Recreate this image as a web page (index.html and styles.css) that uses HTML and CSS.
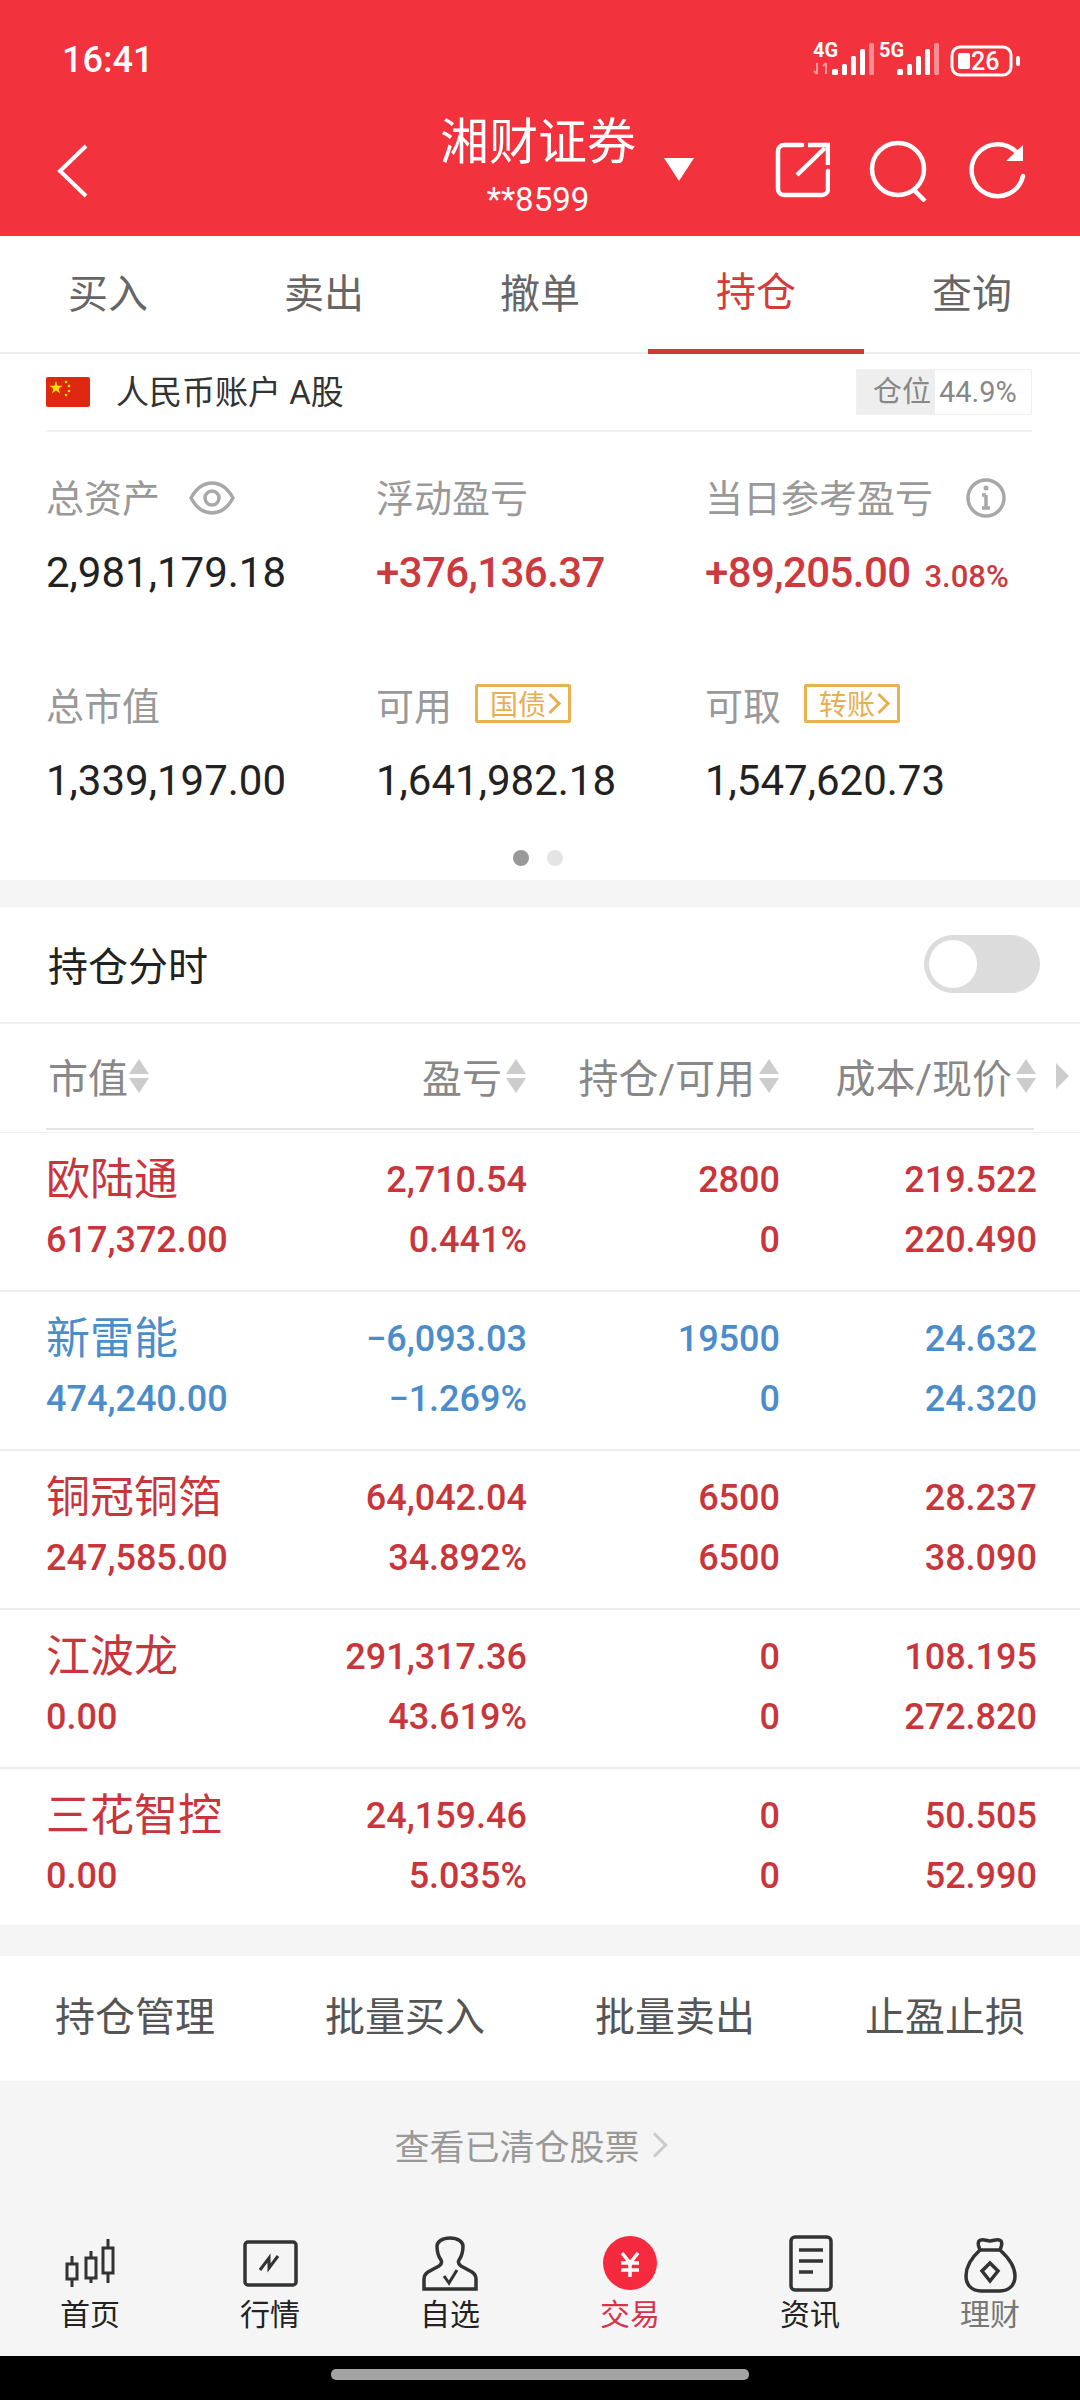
FILE: index.html
```html
<!DOCTYPE html>
<html lang="zh-CN">

<head>
    <meta charset="UTF-8">
    <meta name="viewport" content="width=device-width, initial-scale=1.0">
    <title>湘财证券</title>
    <link rel="stylesheet" href="styles.css">
</head>

<body>
    <header class="top">
        <div class="status">
            <span class="clock">16:41</span>
            <svg class="status-icons" width="240" height="48" viewBox="0 -8 240 48">
                <text x="0" y="17" class="net">4G</text>
                <path d="M4 23v11M1 31l3 3M13 34V23M10 26l3-3" stroke="#fff" stroke-opacity=".5" stroke-width="2" fill="none" />
                <g fill="#fff">
                    <rect x="19" y="29" width="6" height="6" rx="1.5" />
                    <rect x="29" y="24" width="5" height="11" rx="1.5" />
                    <rect x="38" y="16" width="5" height="19" rx="1.5" />
                    <rect x="47" y="9" width="5" height="26" rx="1.5" />
                    <rect x="56" y="3" width="5" height="32" rx="1.5" fill-opacity=".45" />
                </g>
                <text x="66" y="17" class="net">5G</text>
                <g fill="#fff">
                    <rect x="84" y="29" width="6" height="6" rx="1.5" />
                    <rect x="94" y="24" width="5" height="11" rx="1.5" />
                    <rect x="103" y="16" width="5" height="19" rx="1.5" />
                    <rect x="112" y="9" width="5" height="26" rx="1.5" />
                    <rect x="121" y="3" width="5" height="32" rx="1.5" fill-opacity=".45" />
                </g>
                <rect x="139" y="7" width="59" height="28" rx="8" fill="none" stroke="#fff" stroke-width="3" />
                <rect x="145" y="13" width="12" height="16" rx="2" fill="#fff" />
                <text x="158" y="30" class="batt">26</text>
                <rect x="203" y="16" width="4" height="10" rx="2" fill="#fff" />
            </svg>
        </div>
        <div class="nav-bar">
            <svg class="back" width="34" height="54" viewBox="0 0 34 54">
                <path d="M30 2L4 27l26 25" fill="none" stroke="#fff" stroke-width="4" />
            </svg>
            <div class="title-box">
                <div class="title">湘财证券</div>
                <div class="acct">**8599</div>
            </div>
            <svg class="caret" width="30" height="23" viewBox="0 0 30 23">
                <path d="M0 0h30L15 23z" fill="#fff" />
            </svg>
            <div class="nav-icons">
                <svg width="56" height="58" viewBox="0 0 56 58" fill="none" stroke="#fff" stroke-width="4.5">
                    <path d="M28 5H10a6 6 0 0 0-6 6v38a6 6 0 0 0 6 6h38a6 6 0 0 0 6-6V31" stroke-linecap="round" />
                    <path d="M23 35L51 8" />
                    <path d="M34 5h20v20" />
                </svg>
                <svg width="62" height="62" viewBox="0 0 62 62" fill="none" stroke="#fff" stroke-width="4.5">
                    <circle cx="30" cy="29" r="26" />
                    <path d="M46 50l11 11" />
                </svg>
                <svg width="60" height="60" viewBox="0 0 60 60" fill="none" stroke="#fff" stroke-width="4.5">
                    <path d="M50 14A26 26 0 1 0 55 36" stroke-linecap="round" />
                    <path d="M55 5v16H38z" fill="#fff" stroke="none" />
                </svg>
            </div>
        </div>
    </header>

    <nav class="tabs">
        <div class="tab">买入</div>
        <div class="tab">卖出</div>
        <div class="tab">撤单</div>
        <div class="tab active">持仓</div>
        <div class="tab">查询</div>
    </nav>

    <section class="account">
        <div class="account-row">
            <svg class="flag" width="44" height="30" viewBox="0 0 44 30">
                <rect width="44" height="30" rx="2" fill="#de2910" />
                <path d="M10 4l1.6 4.8h5l-4 3 1.5 4.8-4.100-3-4.100 3 1.500-4.800-4-3h5z" fill="#ffde00" />
                <circle cx="20" cy="5" r="1.300" fill="#ffde00" />
                <circle cx="23" cy="9" r="1.300" fill="#ffde00" />
                <circle cx="23" cy="14" r="1.300" fill="#ffde00" />
                <circle cx="20" cy="18" r="1.300" fill="#ffde00" />
            </svg>
            <span class="account-name">人民币账户 A股</span>
            <div class="position">
                <span class="position-label">仓位</span>
                <span class="position-value">44.9%</span>
            </div>
        </div>

        <div class="stats">
            <div class="stat">
                <div class="stat-label">总资产
                    <svg class="eye" width="46" height="34" viewBox="0 0 46 34" fill="none" stroke="#a8a8a8" stroke-width="3.500">
                        <path d="M2 17C8 6 15 2 23 2s15 4 21 15c-6 11-13 15-21 15S8 28 2 17z" />
                        <circle cx="23" cy="17" r="7" />
                    </svg>
                </div>
                <div class="stat-value">2,981,179.18</div>
            </div>
            <div class="stat">
                <div class="stat-label">浮动盈亏</div>
                <div class="stat-value up">+376,136.37</div>
            </div>
            <div class="stat">
                <div class="stat-label">当日参考盈亏
                    <svg class="info" width="40" height="40" viewBox="0 0 40 40" fill="none" stroke="#a8a8a8" stroke-width="3.500">
                        <circle cx="20" cy="20" r="18" />
                        <path d="M20 17v13M16 17h4M16 30h8" />
                        <circle cx="20" cy="10" r="2.500" fill="#a8a8a8" stroke="none" />
                    </svg>
                </div>
                <div class="stat-value up">+89,205.00<span class="stat-pct">3.08%</span></div>
            </div>
            <div class="stat">
                <div class="stat-label">总市值</div>
                <div class="stat-value">1,339,197.00</div>
            </div>
            <div class="stat">
                <div class="stat-label">可用<span class="chip">国债<i class="chip-arrow"></i></span></div>
                <div class="stat-value">1,641,982.18</div>
            </div>
            <div class="stat">
                <div class="stat-label">可取<span class="chip">转账<i class="chip-arrow"></i></span></div>
                <div class="stat-value">1,547,620.73</div>
            </div>
        </div>

        <div class="dots">
            <span class="dot on"></span>
            <span class="dot"></span>
        </div>
    </section>

    <section class="holdings">
        <div class="switch-row">
            <span>持仓分时</span>
            <div class="switch"><div class="knob"></div></div>
        </div>
        <div class="head-wrap">
            <div class="grid head">
                <div class="left">市值<i class="sort"></i></div>
                <div>盈亏<i class="sort"></i></div>
                <div>持仓/可用<i class="sort"></i></div>
                <div>成本/现价<i class="sort"></i></div>
                <i class="more"></i>
            </div>
        </div>

        <div class="grid stock up">
            <div class="name">欧陆通</div><div>2,710.54</div><div>2800</div><div>219.522</div>
            <div class="left">617,372.00</div><div>0.441%</div><div>0</div><div>220.490</div>
        </div>
        <div class="grid stock down">
            <div class="name">新雷能</div><div>−6,093.03</div><div>19500</div><div>24.632</div>
            <div class="left">474,240.00</div><div>−1.269%</div><div>0</div><div>24.320</div>
        </div>
        <div class="grid stock up">
            <div class="name">铜冠铜箔</div><div>64,042.04</div><div>6500</div><div>28.237</div>
            <div class="left">247,585.00</div><div>34.892%</div><div>6500</div><div>38.090</div>
        </div>
        <div class="grid stock up">
            <div class="name">江波龙</div><div>291,317.36</div><div>0</div><div>108.195</div>
            <div class="left">0.00</div><div>43.619%</div><div>0</div><div>272.820</div>
        </div>
        <div class="grid stock up last">
            <div class="name">三花智控</div><div>24,159.46</div><div>0</div><div>50.505</div>
            <div class="left">0.00</div><div>5.035%</div><div>0</div><div>52.990</div>
        </div>
    </section>

    <section class="actions">
        <div>持仓管理</div>
        <div>批量买入</div>
        <div>批量卖出</div>
        <div>止盈止损</div>
    </section>

    <div class="cleared">查看已清仓股票<i class="cleared-arrow"></i></div>

    <footer class="bottom-nav">
        <div class="nav-item">
            <svg width="60" height="60" viewBox="0 0 60 60" fill="none" stroke="#333" stroke-width="3">
                <path d="M12 23v8M12 46v8M7 31h10v15H7zM31 18v7M31 45v5M26 25h10v20H26zM48 6v9M48 40v10M43 15h10v25H43z" />
            </svg>
            <span>首页</span>
        </div>
        <div class="nav-item">
            <svg width="60" height="60" viewBox="0 0 60 60" fill="none" stroke="#333">
                <rect x="5" y="9" width="51" height="43" rx="3" stroke-width="3.500" />
                <path d="M20 37l9-12v10l9-12" stroke-width="3" />
            </svg>
            <span>行情</span>
        </div>
        <div class="nav-item">
            <svg width="60" height="60" viewBox="0 0 60 60" fill="none" stroke="#333" stroke-width="3.500">
                <path d="M4 56V46c0-3 1-5 4-7l11-6c3-2 3-4 2-6-3-4-4-9-4-14 0-4 5-8 13-8s13 4 13 8c0 5-1 10-4 14-1 2-1 4 2 6l11 6c3 2 4 4 4 7v10z" />
                <path d="M24 43l5 7 8-13" stroke-width="3" />
            </svg>
            <span>自选</span>
        </div>
        <div class="nav-item active">
            <svg width="60" height="60" viewBox="0 0 60 60">
                <circle cx="30" cy="30" r="27" fill="#f52a3e" />
                <path d="M22 20l8 10 8-10M21 30h18M21 37h18M30 30v14" fill="none" stroke="#fff" stroke-width="3.500" />
            </svg>
            <span>交易</span>
        </div>
        <div class="nav-item">
            <svg width="60" height="60" viewBox="0 0 60 60" fill="none" stroke="#333">
                <rect x="11" y="4" width="40" height="53" rx="4" stroke-width="3.500" />
                <path d="M19 17h24M19 28h24M19 39h14" stroke-width="3.500" />
            </svg>
            <span>资讯</span>
        </div>
        <div class="nav-item muted">
            <svg width="60" height="60" viewBox="0 0 60 60" fill="none" stroke="#333" stroke-width="3.500">
                <path d="M20 17c-1-3-3-6-1-9 3-3 7 0 11 0s8-3 11 0c2 3 0 6-1 9z" />
                <path d="M20 17C10 26 6 34 6 43c0 9 6 15 15 15h19c9 0 15-6 15-15 0-9-5-17-15-26" />
                <path d="M30 30l8 8-8 10-8-10z" />
            </svg>
            <span>理财</span>
        </div>
    </footer>

    <div class="home-bar"><div class="pill"></div></div>
</body>

</html>
```

FILE: styles.css
```css
* {
    box-sizing: border-box;
}

body {
    margin: 0;
    width: 1080px;
    height: 2400px;
    overflow: hidden;
    background-color: #f5f5f5;
    font-family: Roboto, "Noto Sans CJK SC", sans-serif;
    color: #222;
}

i {
    font-style: normal;
}

/* red header */
.top {
    height: 236px;
    background-color: #f2323c;
    color: white;
}

.status {
    height: 100px;
    padding: 38px 0 0 62px;
    display: flex;
    justify-content: space-between;
    align-items: flex-start;
}

.clock {
    font-size: 36px;
    line-height: 44px;
    font-weight: 500;
}

.status-icons {
    margin: -6px 27px 0 0;
}

.net {
    font: 700 20px Roboto, sans-serif;
    fill: white;
}

.batt {
    font: 500 25px Roboto, sans-serif;
    fill: white;
}

.nav-bar {
    height: 136px;
    display: flex;
    align-items: flex-start;
    padding-left: 56px;
}

.back {
    margin-top: 44px;
}

.title-box {
    width: 196px;
    margin-left: 350px;
    text-align: center;
    color: white;
}

.title {
    font-size: 49px;
    line-height: 60px;
    margin-top: 8px;
    font-family: "Noto Sans CJK SC", sans-serif;
}

.acct {
    font-size: 33px;
    line-height: 38px;
    margin-top: 13px;
}

.caret {
    margin: 58px 0 0 28px;
}

.nav-icons {
    display: flex;
    align-items: flex-start;
    margin: 40px 0 0 80px;
    gap: 38px;
}

/* trade tabs */
.tabs {
    height: 118px;
    display: grid;
    grid-template-columns: repeat(5, 216px);
    background-color: white;
    border-bottom: 2px solid #eee;
}

.tab {
    text-align: center;
    font-size: 40px;
    line-height: 117px;
    color: #666;
}

.tab.active {
    color: #d33c3a;
    border-bottom: 5px solid #cc3a3a;
    height: 118px;
    line-height: 113px;
}

/* account summary */
.account {
    height: 526px;
    background-color: white;
    padding: 0 48px 0 46px;
}

.account-row {
    height: 78px;
    display: flex;
    align-items: center;
    border-bottom: 2px solid #f0f0f0;
}

.flag {
    flex: none;
}

.account-name {
    margin-left: 26px;
    padding-bottom: 5px;
    font-size: 33px;
    color: #333;
}

.position {
    margin-left: auto;
    display: flex;
    height: 46px;
    border: 1px solid #f0f0f0;
    font-size: 29px;
    line-height: 44px;
    color: #888;
}

.position-label {
    width: 78px;
    text-align: right;
    padding-right: 4px;
    background-color: #eeeeee;
}

.position-value {
    width: 96px;
    padding-left: 4px;
}

.stats {
    display: grid;
    grid-template-columns: 330px 329px 1fr;
    grid-auto-rows: 208px;
    padding-top: 35px;
}

.stat-label {
    display: flex;
    align-items: center;
    height: 56px;
    font-size: 38px;
    color: #999;
}

.eye {
    margin: 6px 0 0 29px;
}

.info {
    margin: 5px 0 0 33px;
}

.stat-value {
    margin-top: 23px;
    font-size: 42px;
    line-height: 54px;
    color: #222;
    white-space: nowrap;
}

.stat-value.up {
    color: #cc3a40;
    font-weight: 500;
    letter-spacing: -0.6px;
}

.stat-pct {
    font-size: 31px;
    margin-left: 14px;
    letter-spacing: 0;
}

.chip {
    display: flex;
    align-items: center;
    height: 39px;
    margin-left: 23px;
    padding: 0 10px 0 12px;
    border: 3px solid #eab153;
    border-radius: 2px;
    font-size: 28px;
    color: #e8ae52;
}

.chip-arrow {
    width: 15px;
    height: 15px;
    margin-left: -3px;
    border-top: 3px solid #e8ae52;
    border-right: 3px solid #e8ae52;
    transform: rotate(45deg);
}

.dots {
    display: flex;
    justify-content: center;
    gap: 18px;
    margin-top: -33px;
    padding-right: 2px;
}

.dot {
    width: 16px;
    height: 16px;
    border-radius: 50%;
    background-color: #e4e4e4;
}

.dot.on {
    background-color: #999;
}

/* holdings table */
.holdings {
    margin-top: 27px;
    background-color: white;
}

.switch-row {
    height: 117px;
    padding: 0 40px 2px 48px;
    display: flex;
    justify-content: space-between;
    align-items: center;
    font-size: 40px;
    border-bottom: 2px solid #f0f0f0;
}

.switch {
    width: 116px;
    height: 58px;
    padding: 5px;
    border-radius: 29px;
    background-color: #dcdcdc;
}

.knob {
    width: 48px;
    height: 48px;
    border-radius: 50%;
    background-color: white;
}

.grid {
    display: grid;
    grid-template-columns: 250px 231px 253px 257px;
    text-align: right;
}

.head-wrap {
    padding-left: 46px;
    height: 109px;
    border-bottom: 1px solid #f0f0f0;
}

.head {
    grid-template-columns: 250px 231px 253px 257px 30px;
    align-items: center;
    height: 106px;
    width: 988px;
    font-size: 40px;
    color: #888;
    border-bottom: 2px solid #e4e4e4;
}

.head > div {
    display: flex;
    justify-content: flex-end;
    align-items: center;
    white-space: nowrap;
}

.head > .left {
    justify-content: flex-start;
    padding-left: 2px;
}

.sort {
    position: relative;
    width: 22px;
    height: 34px;
    margin-left: 3px;
}

.head > .left .sort {
    margin-left: 0;
}

.sort::before,
.sort::after {
    content: "";
    position: absolute;
    left: 1px;
    border-left: 10px solid transparent;
    border-right: 10px solid transparent;
}

.sort::before {
    top: 0;
    border-bottom: 15px solid #ccc;
}

.sort::after {
    bottom: 0;
    border-top: 15px solid #ccc;
}

.more {
    justify-self: end;
    width: 0;
    height: 0;
    border-left: 13px solid #ccc;
    border-top: 13px solid transparent;
    border-bottom: 13px solid transparent;
    margin-right: -2px;
}

.stock {
    height: 159px;
    padding: 17px 0 0 46px;
    grid-auto-rows: 60px;
    font-size: 36px;
    line-height: 60px;
    font-weight: 500;
    border-bottom: 2px solid #eee;
}

.stock.last {
    border-bottom: 0;
    height: 156px;
}

.stock.up {
    color: #c8363c;
}

.stock.down {
    color: #4b8ccb;
}

.stock .name {
    font-size: 44px;
    font-weight: 400;
    text-align: left;
}

.stock .left {
    text-align: left;
}

/* bottom */
.actions {
    margin-top: 31px;
    height: 125px;
    padding-bottom: 10px;
    background-color: white;
    display: grid;
    grid-template-columns: repeat(4, 270px);
    align-items: center;
    text-align: center;
    font-size: 40px;
    color: #555;
}

.cleared {
    height: 135px;
    display: flex;
    justify-content: center;
    align-items: center;
    font-size: 35px;
    color: #999;
    padding: 0 22px 8px 0;
}

.cleared-arrow {
    width: 18px;
    height: 18px;
    margin-left: 6px;
    border-top: 3px solid #ccc;
    border-right: 3px solid #ccc;
    transform: rotate(45deg);
}

.bottom-nav {
    display: grid;
    grid-template-columns: repeat(6, 180px);
    height: 140px;
    padding-top: 17px;
}

.nav-item {
    display: flex;
    flex-direction: column;
    align-items: center;
    font-size: 30px;
    line-height: 36px;
    color: #222;
}

.nav-item span {
    margin-top: 4px;
}

.nav-item.active {
    color: #d8324a;
}

.nav-item.muted {
    color: #777;
}

.home-bar {
    height: 44px;
    background-color: black;
    padding-top: 13px;
}

.pill {
    width: 418px;
    height: 11px;
    margin: 0 auto;
    border-radius: 5px;
    background-color: #a3a3a3;
}
```
